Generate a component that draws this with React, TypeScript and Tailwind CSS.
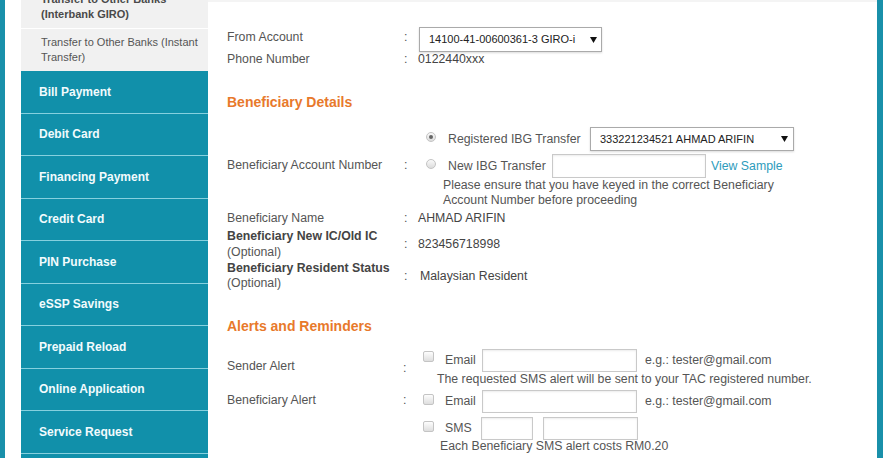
import React from "react";

const Arrow = () => (
  <svg width="7" height="6" viewBox="0 0 7 6" className="shrink-0">
    <polygon points="0,0 7,0 3.5,6" fill="#111" />
  </svg>
);

const Radio = ({ checked, className = "" }: { checked?: boolean; className?: string }) => (
  <span
    className={
      "inline-flex items-center justify-center w-[10px] h-[10px] rounded-full border border-[#c4c4c4] bg-gradient-to-b from-[#fafafa] to-[#dcdcdc] shrink-0 " +
      className
    }
  >
    {checked && <span className="w-[4px] h-[4px] rounded-full bg-[#666]" />}
  </span>
);

const Check = ({ className = "" }: { className?: string }) => (
  <span
    className={
      "inline-block w-[11px] h-[11px] rounded-[2px] border border-[#c4c4c4] bg-gradient-to-b from-[#fdfdfd] to-[#dedede] shrink-0 " +
      className
    }
  />
);

const Input = ({ w }: { w: string }) => (
  <span className={"inline-block h-full border border-[#c9c9c9] bg-white shadow-[inset_0_1px_2px_rgba(0,0,0,0.08)] shrink-0 " + w} />
);

const menu = [
  "Bill Payment",
  "Debit Card",
  "Financing Payment",
  "Credit Card",
  "PIN Purchase",
  "eSSP Savings",
  "Prepaid Reload",
  "Online Application",
  "Service Request",
];

export default function App() {
  return (
    <div className="w-[883px] h-[458px] overflow-hidden flex bg-white font-['Liberation_Sans',Arial,sans-serif]">
      <div className="w-[5px] bg-[#1990aa] shrink-0" />
      <div className="w-[16px] shrink-0" />
      {/* Sidebar */}
      <div className="w-[187px] shrink-0 flex flex-col -mt-[14px]">
        <div className="bg-[#f1f1f1] border-b border-white pl-[20px] pr-[4px] py-[6px] text-[11px] leading-[15px] font-bold text-[#4a4a4a]">
          Transfer to Other Banks
          <br />
          (Interbank GIRO)
        </div>
        <div className="bg-[#f1f1f1] pl-[20px] py-[6px] text-[11px] leading-[15px] text-[#555] whitespace-nowrap">
          Transfer to Other Banks (Instant
          <br />
          Transfer)
        </div>
        {menu.map((m) => (
          <div
            key={m}
            className="h-[42.5px] shrink-0 bg-[#1190aa] border-b border-[#86d0de] flex items-center pl-[18px] text-[12px] font-bold text-[#f2fbfd]"
          >
            {m}
          </div>
        ))}
        <div className="h-[30px] shrink-0 bg-[#1190aa]" />
      </div>

      {/* Content */}
      <div className="flex-1 border-t-[2px] border-[#f4f4f4] pl-[19px] pt-[25px] text-[12.3px] text-[#555]">
        {/* From Account */}
        <div className="grid grid-cols-[177px_14px_1fr] items-start h-[25px]">
          <div className="pt-[3px] leading-[15px]">From Account</div>
          <div className="pt-[3px] leading-[15px]">:</div>
          <div className="pl-[1px]">
            <div className="w-[183px] h-[25px] border border-[#aaa] bg-white shadow-[0_1px_2px_rgba(0,0,0,0.15)] flex items-center justify-between pl-[9px] pr-[4px] text-[11px] text-[#222]">
              <span>14100-41-00600361-3 GIRO-i</span>
              <Arrow />
            </div>
          </div>
        </div>
        {/* Phone */}
        <div className="grid grid-cols-[177px_14px_1fr] leading-[15px]">
          <div>Phone Number</div>
          <div>:</div>
          <div className="text-[#444]">0122440xxx</div>
        </div>

        <div className="mt-[27px] text-[14px] leading-[16px] font-bold text-[#e8792b]">Beneficiary Details</div>

        {/* Beneficiary Account Number */}
        <div className="mt-[17px] grid grid-cols-[177px_14px_1fr] items-start">
          <div className="pt-[31px] leading-[15px]">Beneficiary Account Number</div>
          <div className="pt-[31px] leading-[15px]">:</div>
          <div className="flex flex-col">
            <div className="flex items-center h-[24px]">
              <Radio checked className="ml-[8px] mb-[5px]" />
              <span className="ml-[12px] w-[142px] shrink-0">Registered IBG Transfer</span>
              <div className="w-[204px] h-[24px] border border-[#aaa] bg-white shadow-[0_1px_2px_rgba(0,0,0,0.15)] flex items-center justify-between pl-[9px] pr-[5px] text-[11px] text-[#222]">
                <span>333221234521 AHMAD ARIFIN</span>
                <Arrow />
              </div>
            </div>
            <div className="flex items-center h-[24px] mt-[3px]">
              <Radio className="ml-[8px] mb-[5px]" />
              <span className="ml-[12px] w-[104px] shrink-0">New IBG Transfer</span>
              <Input w="w-[154px]" />
              <span className="ml-[5px] text-[#2d9cbc]">View Sample</span>
            </div>
            <div className="pl-[25px] leading-[15px]">
              Please ensure that you have keyed in the correct Beneficiary
              <br />
              Account Number before proceeding
            </div>
          </div>
        </div>

        {/* Name */}
        <div className="mt-[3px] grid grid-cols-[177px_14px_1fr] leading-[15px]">
          <div>Beneficiary Name</div>
          <div>:</div>
          <div className="text-[#444]">AHMAD ARIFIN</div>
        </div>
        <div className="mt-[2px] grid grid-cols-[177px_14px_1fr] items-center leading-[16px]">
          <div>
            <div className="font-bold text-[#444]">Beneficiary New IC/Old IC</div>
            <div>(Optional)</div>
          </div>
          <div>:</div>
          <div className="text-[#444]">823456718998</div>
        </div>
        <div className="mt-[1px] grid grid-cols-[177px_14px_1fr] items-center leading-[15px]">
          <div>
            <div className="font-bold text-[#444]">Beneficiary Resident Status</div>
            <div>(Optional)</div>
          </div>
          <div>:</div>
          <div className="pl-[2px] text-[#444]">Malaysian Resident</div>
        </div>

        <div className="mt-[27px] text-[14px] leading-[16px] font-bold text-[#e8792b]">Alerts and Reminders</div>

        {/* Sender Alert */}
        <div className="mt-[15px] grid grid-cols-[177px_14px_1fr] items-start">
          <div className="pt-[10px] leading-[15px]">Sender Alert</div>
          <div className="pt-[12px] leading-[15px] -ml-[1px]">:</div>
          <div className="flex flex-col">
            <div className="flex items-center h-[23px]">
              <Check className="ml-[5px] mb-[8px]" />
              <span className="ml-[11px] w-[37px] shrink-0">Email</span>
              <Input w="w-[155px]" />
              <span className="ml-[8px]">e.g.: tester@gmail.com</span>
            </div>
            <div className="pl-[19px] leading-[15px]">
              The requested SMS alert will be sent to your TAC registered number.
            </div>
          </div>
        </div>

        {/* Beneficiary Alert */}
        <div className="mt-[3px] grid grid-cols-[177px_14px_1fr] items-start">
          <div className="pt-[3px] leading-[15px]">Beneficiary Alert</div>
          <div className="pt-[3px] leading-[15px] -ml-[1px]">:</div>
          <div className="flex flex-col">
            <div className="flex items-center h-[23px]">
              <Check className="ml-[5px] mb-[4px]" />
              <span className="ml-[11px] w-[37px] shrink-0">Email</span>
              <Input w="w-[155px]" />
              <span className="ml-[8px]">e.g.: tester@gmail.com</span>
            </div>
            <div className="flex items-center h-[23px] mt-[4px]">
              <Check className="ml-[5px] mb-[5px]" />
              <span className="ml-[11px] w-[36px] shrink-0">SMS</span>
              <Input w="w-[52px]" />
              <span className="w-[10px] shrink-0" />
              <Input w="w-[95px]" />
            </div>
            <div className="pl-[22px] leading-[15px] -mt-[1px]">Each Beneficiary SMS alert costs RM0.20</div>
          </div>
        </div>
      </div>
      <div className="w-[6px] bg-[#1990aa] shrink-0" />
    </div>
  );
}
